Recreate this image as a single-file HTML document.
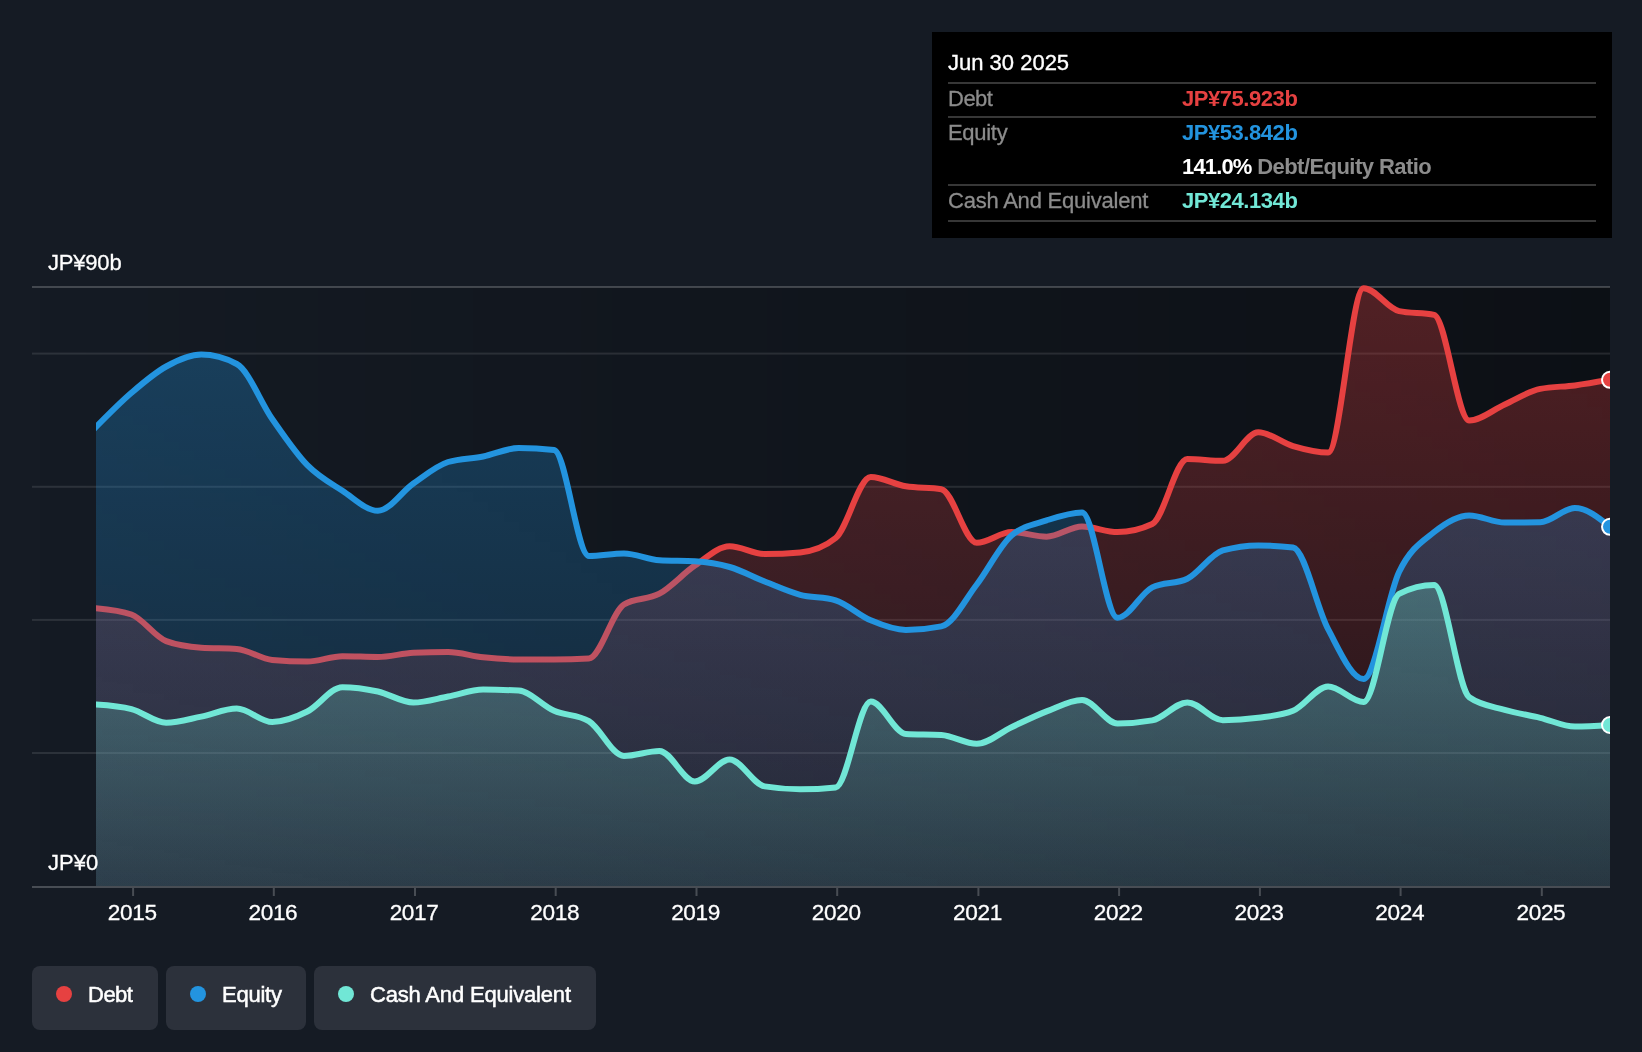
<!DOCTYPE html>
<html lang="en">
<head>
<meta charset="utf-8">
<title>Debt to Equity History</title>
<style>
html,body{margin:0;padding:0;background:#151b24;}
body{width:1642px;height:1052px;position:relative;overflow:hidden;font-family:"Liberation Sans",sans-serif;color:#fff;}
#wrap{position:absolute;left:0;top:0;width:1642px;height:1052px;will-change:transform;}
#chart{position:absolute;left:0;top:0;display:block;}
#chart{font-family:"Liberation Sans",sans-serif;font-size:22px;}
#chart text{fill:#fff;stroke:#fff;stroke-width:0.3px;}
#tip{position:absolute;left:932px;top:32px;width:680px;height:206px;background:#000;font-size:22px;}
#tip .ln{position:absolute;left:16px;width:648px;height:2px;background:#373737;}
#tip .t{position:absolute;white-space:nowrap;line-height:26px;height:26px;}
#tip .lab{left:16px;color:#8c8c8c;-webkit-text-stroke:0.3px #8c8c8c;}
#tip .val{left:250px;font-weight:bold;letter-spacing:-0.45px;}
#tip .title{left:16px;color:#fff;-webkit-text-stroke:0.35px #fff;}
.grey{color:#8c8c8c;}
#legend{position:absolute;left:32px;top:966px;height:64px;display:flex;gap:8px;}
#legend .b{height:64px;box-sizing:border-box;padding:0 24px;background:#2c313b;border-radius:8px;display:flex;align-items:flex-start;font-size:22px;white-space:nowrap;}
#legend .dot{width:16px;height:16px;border-radius:50%;margin:20px 16px 0 0;flex:none;}
#legend .tx{-webkit-text-stroke:0.5px #fff;display:block;line-height:26px;margin-top:16px;}
</style>
</head>
<body>
<div id="wrap">
<svg id="chart" width="1642" height="1052" viewBox="0 0 1642 1052">
<defs>
<linearGradient id="gbg" x1="0" y1="0" x2="1" y2="0"><stop offset="0" stop-color="#000" stop-opacity="0"/><stop offset="1" stop-color="#000" stop-opacity="0.4"/></linearGradient>
<linearGradient id="gdebt" x1="0" y1="0" x2="0" y2="1"><stop offset="0" stop-color="#e64141" stop-opacity="0.315"/><stop offset="1" stop-color="#e64141" stop-opacity="0.085"/></linearGradient>
<linearGradient id="gequity" x1="0" y1="0" x2="0" y2="1"><stop offset="0" stop-color="#2394df" stop-opacity="0.3"/><stop offset="1" stop-color="#2394df" stop-opacity="0.12"/></linearGradient>
<linearGradient id="gcash" x1="0" y1="0" x2="0" y2="1"><stop offset="0" stop-color="#71e7d6" stop-opacity="0.3"/><stop offset="1" stop-color="#71e7d6" stop-opacity="0.1"/></linearGradient>
<clipPath id="clip"><rect x="96" y="270" width="1514" height="616"/></clipPath>
</defs>
<rect x="32" y="287" width="1578" height="599" fill="url(#gbg)"/>
<g fill="#fff">
<rect x="32" y="286" width="1578" height="2" fill-opacity="0.2"/>
<rect x="32" y="352.6" width="1578" height="2" fill-opacity="0.1"/>
<rect x="32" y="485.8" width="1578" height="2" fill-opacity="0.1"/>
<rect x="32" y="618.9" width="1578" height="2" fill-opacity="0.1"/>
<rect x="32" y="752" width="1578" height="2" fill-opacity="0.1"/>
<rect x="32" y="886" width="1578" height="2" fill-opacity="0.22"/>
<rect x="132.1" y="888" width="2" height="8" fill="#fff" fill-opacity="0.22"/><rect x="272.8" y="888" width="2" height="8" fill="#fff" fill-opacity="0.22"/><rect x="414.0" y="888" width="2" height="8" fill="#fff" fill-opacity="0.22"/><rect x="554.7" y="888" width="2" height="8" fill="#fff" fill-opacity="0.22"/><rect x="695.5" y="888" width="2" height="8" fill="#fff" fill-opacity="0.22"/><rect x="836.2" y="888" width="2" height="8" fill="#fff" fill-opacity="0.22"/><rect x="977.4" y="888" width="2" height="8" fill="#fff" fill-opacity="0.22"/><rect x="1118.1" y="888" width="2" height="8" fill="#fff" fill-opacity="0.22"/><rect x="1258.9" y="888" width="2" height="8" fill="#fff" fill-opacity="0.22"/><rect x="1399.6" y="888" width="2" height="8" fill="#fff" fill-opacity="0.22"/><rect x="1540.8" y="888" width="2" height="8" fill="#fff" fill-opacity="0.22"/>
</g>
<g clip-path="url(#clip)" fill="none" stroke-width="6" stroke-linejoin="round" stroke-linecap="square">
<path d="M96.00,608.20C107.83,609.25,119.65,610.30,131.48,614.50C143.05,618.61,154.62,636.75,166.19,641.10C177.88,645.50,189.58,646.91,201.28,647.70C213.10,648.50,224.93,648.10,236.76,648.90C248.58,649.70,260.41,658.75,272.23,659.90C283.93,661.03,295.63,661.60,307.33,661.60C319.03,661.60,330.72,656.20,342.42,656.20C354.25,656.20,366.07,657.00,377.90,657.00C389.72,657.00,401.55,653.35,413.38,652.80C424.95,652.27,436.52,652.00,448.08,652.00C459.78,652.00,471.48,656.07,483.18,657.30C495.00,658.55,506.83,659.40,518.66,659.40C530.48,659.40,542.31,659.40,554.13,659.40C565.70,659.40,577.27,659.10,588.84,658.50C600.54,657.89,612.24,611.62,623.93,604.50C635.76,597.30,647.59,600.18,659.41,593.70C671.24,587.22,683.06,573.57,694.89,565.60C706.46,557.80,718.03,546.20,729.60,546.20C741.29,546.20,752.99,554.00,764.69,554.00C776.52,554.00,788.34,553.47,800.17,552.40C811.99,551.33,823.82,547.60,835.65,538.00C847.34,528.50,859.04,477.00,870.74,477.00C882.44,477.00,894.13,484.39,905.83,486.30C917.66,488.23,929.48,487.27,941.31,489.20C953.14,491.13,964.96,542.80,976.79,542.80C988.36,542.80,999.93,532.10,1011.50,532.10C1023.19,532.10,1034.89,536.70,1046.59,536.70C1058.41,536.70,1070.24,526.50,1082.07,526.50C1093.89,526.50,1105.72,532.10,1117.55,532.10C1129.11,532.10,1140.68,529.40,1152.25,524.00C1163.95,518.54,1175.65,459.00,1187.34,459.00C1199.17,459.00,1211.00,460.80,1222.82,460.80C1234.65,460.80,1246.48,432.30,1258.30,432.30C1269.87,432.30,1281.44,442.72,1293.01,446.10C1304.71,449.52,1316.40,452.60,1328.10,452.60C1339.93,452.60,1351.75,288.20,1363.58,288.20C1375.41,288.20,1387.23,308.54,1399.06,311.10C1410.76,313.63,1422.45,312.37,1434.15,314.90C1445.85,317.43,1457.55,420.60,1469.24,420.60C1481.07,420.60,1492.90,409.68,1504.72,404.40C1516.55,399.12,1528.37,391.29,1540.20,388.90C1551.77,386.57,1563.34,386.90,1574.91,385.40C1586.60,383.88,1598.30,381.84,1610.00,379.80L1610.00,886L96.00,886Z" fill="url(#gdebt)"/>
<path d="M96.00,608.20C107.83,609.25,119.65,610.30,131.48,614.50C143.05,618.61,154.62,636.75,166.19,641.10C177.88,645.50,189.58,646.91,201.28,647.70C213.10,648.50,224.93,648.10,236.76,648.90C248.58,649.70,260.41,658.75,272.23,659.90C283.93,661.03,295.63,661.60,307.33,661.60C319.03,661.60,330.72,656.20,342.42,656.20C354.25,656.20,366.07,657.00,377.90,657.00C389.72,657.00,401.55,653.35,413.38,652.80C424.95,652.27,436.52,652.00,448.08,652.00C459.78,652.00,471.48,656.07,483.18,657.30C495.00,658.55,506.83,659.40,518.66,659.40C530.48,659.40,542.31,659.40,554.13,659.40C565.70,659.40,577.27,659.10,588.84,658.50C600.54,657.89,612.24,611.62,623.93,604.50C635.76,597.30,647.59,600.18,659.41,593.70C671.24,587.22,683.06,573.57,694.89,565.60C706.46,557.80,718.03,546.20,729.60,546.20C741.29,546.20,752.99,554.00,764.69,554.00C776.52,554.00,788.34,553.47,800.17,552.40C811.99,551.33,823.82,547.60,835.65,538.00C847.34,528.50,859.04,477.00,870.74,477.00C882.44,477.00,894.13,484.39,905.83,486.30C917.66,488.23,929.48,487.27,941.31,489.20C953.14,491.13,964.96,542.80,976.79,542.80C988.36,542.80,999.93,532.10,1011.50,532.10C1023.19,532.10,1034.89,536.70,1046.59,536.70C1058.41,536.70,1070.24,526.50,1082.07,526.50C1093.89,526.50,1105.72,532.10,1117.55,532.10C1129.11,532.10,1140.68,529.40,1152.25,524.00C1163.95,518.54,1175.65,459.00,1187.34,459.00C1199.17,459.00,1211.00,460.80,1222.82,460.80C1234.65,460.80,1246.48,432.30,1258.30,432.30C1269.87,432.30,1281.44,442.72,1293.01,446.10C1304.71,449.52,1316.40,452.60,1328.10,452.60C1339.93,452.60,1351.75,288.20,1363.58,288.20C1375.41,288.20,1387.23,308.54,1399.06,311.10C1410.76,313.63,1422.45,312.37,1434.15,314.90C1445.85,317.43,1457.55,420.60,1469.24,420.60C1481.07,420.60,1492.90,409.68,1504.72,404.40C1516.55,399.12,1528.37,391.29,1540.20,388.90C1551.77,386.57,1563.34,386.90,1574.91,385.40C1586.60,383.88,1598.30,381.84,1610.00,379.80" stroke="#e64141"/>
<path d="M96.00,427.00C107.83,414.98,119.65,402.97,131.48,392.80C143.05,382.85,154.62,372.86,166.19,366.50C177.88,360.07,189.58,354.60,201.28,354.60C213.10,354.60,224.93,357.73,236.76,364.00C248.58,370.27,260.41,402.06,272.23,419.00C283.93,435.76,295.63,453.23,307.33,465.20C319.03,477.17,330.72,483.23,342.42,490.80C354.25,498.45,366.07,510.80,377.90,510.80C389.72,510.80,401.55,491.70,413.38,483.50C424.95,475.48,436.52,465.63,448.08,462.00C459.78,458.33,471.48,458.82,483.18,456.50C495.00,454.16,506.83,448.00,518.66,448.00C530.48,448.00,542.31,448.67,554.13,450.00C565.70,451.30,577.27,555.90,588.84,555.90C600.54,555.90,612.24,553.50,623.93,553.50C635.76,553.50,647.59,559.63,659.41,560.30C671.24,560.97,683.06,560.63,694.89,561.30C706.46,561.95,718.03,563.67,729.60,567.00C741.29,570.37,752.99,576.89,764.69,581.50C776.52,586.16,788.34,591.67,800.17,594.80C811.99,597.93,823.82,596.63,835.65,600.30C847.34,603.93,859.04,615.35,870.74,620.30C882.44,625.25,894.13,630.00,905.83,630.00C917.66,630.00,929.48,628.80,941.31,626.40C953.14,624.00,964.96,599.85,976.79,584.50C988.36,569.49,999.93,545.46,1011.50,535.50C1023.19,525.43,1034.89,524.24,1046.59,520.40C1058.41,516.52,1070.24,512.40,1082.07,512.40C1093.89,512.40,1105.72,617.80,1117.55,617.80C1129.11,617.80,1140.68,593.07,1152.25,587.40C1163.95,581.67,1175.65,584.53,1187.34,578.80C1199.17,573.00,1211.00,553.73,1222.82,550.40C1234.65,547.07,1246.48,545.40,1258.30,545.40C1269.87,545.40,1281.44,546.10,1293.01,547.50C1304.71,548.92,1316.40,607.33,1328.10,629.20C1339.93,651.31,1351.75,679.10,1363.58,679.10C1375.41,679.10,1387.23,596.53,1399.06,572.00C1410.76,547.74,1422.45,541.43,1434.15,532.00C1445.85,522.57,1457.55,515.40,1469.24,515.40C1481.07,515.40,1492.90,522.60,1504.72,522.60C1516.55,522.60,1528.37,522.50,1540.20,522.30C1551.77,522.10,1563.34,508.00,1574.91,508.00C1586.60,508.00,1598.30,517.40,1610.00,526.80L1610.00,886L96.00,886Z" fill="url(#gequity)"/>
<path d="M96.00,427.00C107.83,414.98,119.65,402.97,131.48,392.80C143.05,382.85,154.62,372.86,166.19,366.50C177.88,360.07,189.58,354.60,201.28,354.60C213.10,354.60,224.93,357.73,236.76,364.00C248.58,370.27,260.41,402.06,272.23,419.00C283.93,435.76,295.63,453.23,307.33,465.20C319.03,477.17,330.72,483.23,342.42,490.80C354.25,498.45,366.07,510.80,377.90,510.80C389.72,510.80,401.55,491.70,413.38,483.50C424.95,475.48,436.52,465.63,448.08,462.00C459.78,458.33,471.48,458.82,483.18,456.50C495.00,454.16,506.83,448.00,518.66,448.00C530.48,448.00,542.31,448.67,554.13,450.00C565.70,451.30,577.27,555.90,588.84,555.90C600.54,555.90,612.24,553.50,623.93,553.50C635.76,553.50,647.59,559.63,659.41,560.30C671.24,560.97,683.06,560.63,694.89,561.30C706.46,561.95,718.03,563.67,729.60,567.00C741.29,570.37,752.99,576.89,764.69,581.50C776.52,586.16,788.34,591.67,800.17,594.80C811.99,597.93,823.82,596.63,835.65,600.30C847.34,603.93,859.04,615.35,870.74,620.30C882.44,625.25,894.13,630.00,905.83,630.00C917.66,630.00,929.48,628.80,941.31,626.40C953.14,624.00,964.96,599.85,976.79,584.50C988.36,569.49,999.93,545.46,1011.50,535.50C1023.19,525.43,1034.89,524.24,1046.59,520.40C1058.41,516.52,1070.24,512.40,1082.07,512.40C1093.89,512.40,1105.72,617.80,1117.55,617.80C1129.11,617.80,1140.68,593.07,1152.25,587.40C1163.95,581.67,1175.65,584.53,1187.34,578.80C1199.17,573.00,1211.00,553.73,1222.82,550.40C1234.65,547.07,1246.48,545.40,1258.30,545.40C1269.87,545.40,1281.44,546.10,1293.01,547.50C1304.71,548.92,1316.40,607.33,1328.10,629.20C1339.93,651.31,1351.75,679.10,1363.58,679.10C1375.41,679.10,1387.23,596.53,1399.06,572.00C1410.76,547.74,1422.45,541.43,1434.15,532.00C1445.85,522.57,1457.55,515.40,1469.24,515.40C1481.07,515.40,1492.90,522.60,1504.72,522.60C1516.55,522.60,1528.37,522.50,1540.20,522.30C1551.77,522.10,1563.34,508.00,1574.91,508.00C1586.60,508.00,1598.30,517.40,1610.00,526.80" stroke="#2394df"/>
<path d="M96.00,704.50C107.83,705.27,119.65,706.03,131.48,709.10C143.05,712.10,154.62,722.70,166.19,722.70C177.88,722.70,189.58,718.93,201.28,716.60C213.10,714.24,224.93,708.60,236.76,708.60C248.58,708.60,260.41,722.00,272.23,722.00C283.93,722.00,295.63,717.30,307.33,711.50C319.03,705.70,330.72,687.20,342.42,687.20C354.25,687.20,366.07,688.95,377.90,691.50C389.72,694.05,401.55,702.50,413.38,702.50C424.95,702.50,436.52,698.64,448.08,696.50C459.78,694.34,471.48,689.60,483.18,689.60C495.00,689.60,506.83,689.93,518.66,690.60C530.48,691.27,542.31,705.70,554.13,710.80C565.70,715.79,577.27,714.23,588.84,721.10C600.54,728.04,612.24,755.90,623.93,755.90C635.76,755.90,647.59,751.00,659.41,751.00C671.24,751.00,683.06,781.50,694.89,781.50C706.46,781.50,718.03,759.60,729.60,759.60C741.29,759.60,752.99,784.49,764.69,786.40C776.52,788.33,788.34,789.30,800.17,789.30C811.99,789.30,823.82,788.67,835.65,787.40C847.34,786.15,859.04,701.60,870.74,701.60C882.44,701.60,894.13,733.34,905.83,734.00C917.66,734.67,929.48,734.33,941.31,735.00C953.14,735.67,964.96,743.80,976.79,743.80C988.36,743.80,999.93,732.57,1011.50,727.20C1023.19,721.77,1034.89,715.93,1046.59,711.40C1058.41,706.82,1070.24,699.90,1082.07,699.90C1093.89,699.90,1105.72,723.50,1117.55,723.50C1129.11,723.50,1140.68,722.47,1152.25,720.40C1163.95,718.31,1175.65,702.40,1187.34,702.40C1199.17,702.40,1211.00,720.20,1222.82,720.20C1234.65,720.20,1246.48,719.40,1258.30,717.80C1269.87,716.23,1281.44,715.47,1293.01,710.80C1304.71,706.08,1316.40,686.40,1328.10,686.40C1339.93,686.40,1351.75,702.00,1363.58,702.00C1375.41,702.00,1387.23,599.83,1399.06,593.90C1410.76,588.03,1422.45,585.10,1434.15,585.10C1445.85,585.10,1457.55,688.99,1469.24,697.30C1481.07,705.70,1492.90,706.48,1504.72,709.90C1516.55,713.32,1528.37,714.98,1540.20,717.80C1551.77,720.56,1563.34,726.60,1574.91,726.60C1586.60,726.60,1598.30,725.80,1610.00,725.00L1610.00,886L96.00,886Z" fill="url(#gcash)"/>
<path d="M96.00,704.50C107.83,705.27,119.65,706.03,131.48,709.10C143.05,712.10,154.62,722.70,166.19,722.70C177.88,722.70,189.58,718.93,201.28,716.60C213.10,714.24,224.93,708.60,236.76,708.60C248.58,708.60,260.41,722.00,272.23,722.00C283.93,722.00,295.63,717.30,307.33,711.50C319.03,705.70,330.72,687.20,342.42,687.20C354.25,687.20,366.07,688.95,377.90,691.50C389.72,694.05,401.55,702.50,413.38,702.50C424.95,702.50,436.52,698.64,448.08,696.50C459.78,694.34,471.48,689.60,483.18,689.60C495.00,689.60,506.83,689.93,518.66,690.60C530.48,691.27,542.31,705.70,554.13,710.80C565.70,715.79,577.27,714.23,588.84,721.10C600.54,728.04,612.24,755.90,623.93,755.90C635.76,755.90,647.59,751.00,659.41,751.00C671.24,751.00,683.06,781.50,694.89,781.50C706.46,781.50,718.03,759.60,729.60,759.60C741.29,759.60,752.99,784.49,764.69,786.40C776.52,788.33,788.34,789.30,800.17,789.30C811.99,789.30,823.82,788.67,835.65,787.40C847.34,786.15,859.04,701.60,870.74,701.60C882.44,701.60,894.13,733.34,905.83,734.00C917.66,734.67,929.48,734.33,941.31,735.00C953.14,735.67,964.96,743.80,976.79,743.80C988.36,743.80,999.93,732.57,1011.50,727.20C1023.19,721.77,1034.89,715.93,1046.59,711.40C1058.41,706.82,1070.24,699.90,1082.07,699.90C1093.89,699.90,1105.72,723.50,1117.55,723.50C1129.11,723.50,1140.68,722.47,1152.25,720.40C1163.95,718.31,1175.65,702.40,1187.34,702.40C1199.17,702.40,1211.00,720.20,1222.82,720.20C1234.65,720.20,1246.48,719.40,1258.30,717.80C1269.87,716.23,1281.44,715.47,1293.01,710.80C1304.71,706.08,1316.40,686.40,1328.10,686.40C1339.93,686.40,1351.75,702.00,1363.58,702.00C1375.41,702.00,1387.23,599.83,1399.06,593.90C1410.76,588.03,1422.45,585.10,1434.15,585.10C1445.85,585.10,1457.55,688.99,1469.24,697.30C1481.07,705.70,1492.90,706.48,1504.72,709.90C1516.55,713.32,1528.37,714.98,1540.20,717.80C1551.77,720.56,1563.34,726.60,1574.91,726.60C1586.60,726.60,1598.30,725.80,1610.00,725.00" stroke="#71e7d6"/>
<g stroke="#fff" stroke-width="2">
<circle cx="1610" cy="379.8" r="8" fill="#e64141"/>
<circle cx="1610" cy="526.8" r="8" fill="#2394df"/>
<circle cx="1610" cy="725.0" r="8" fill="#71e7d6"/>
</g>
</g>

<text id="ymax" x="48" y="270" letter-spacing="-0.2">JP¥90b</text>
<text id="ymin" x="48" y="870">JP¥0</text>
<g id="xl" letter-spacing="-0.35" style="font-size:22.6px"><text x="132.2" y="920" text-anchor="middle">2015</text><text x="272.9" y="920" text-anchor="middle">2016</text><text x="414.1" y="920" text-anchor="middle">2017</text><text x="554.8" y="920" text-anchor="middle">2018</text><text x="695.6" y="920" text-anchor="middle">2019</text><text x="836.3" y="920" text-anchor="middle">2020</text><text x="977.5" y="920" text-anchor="middle">2021</text><text x="1118.2" y="920" text-anchor="middle">2022</text><text x="1259.0" y="920" text-anchor="middle">2023</text><text x="1399.7" y="920" text-anchor="middle">2024</text><text x="1540.9" y="920" text-anchor="middle">2025</text></g>
</svg>

<div id="tip">
<div class="t title" id="t_title" style="top:18px">Jun 30 2025</div>
<div class="ln" style="top:50px"></div>
<div class="t lab" id="t_debt" style="top:54px;letter-spacing:-0.5px">Debt</div>
<div class="t val" id="v_debt" style="top:54px;color:#e64141">JP¥75.923b</div>
<div class="ln" style="top:84px"></div>
<div class="t lab" id="t_equity" style="top:88px;letter-spacing:-0.3px">Equity</div>
<div class="t val" id="v_equity" style="top:88px;color:#2394df">JP¥53.842b</div>
<div class="t val" id="v_ratio" style="top:122px;color:#fff"><span id="v_pct" style="letter-spacing:-0.85px">141.0%</span> <span class="grey" id="v_rl" style="letter-spacing:-0.55px">Debt/Equity Ratio</span></div>
<div class="ln" style="top:152px"></div>
<div class="t lab" id="t_cash" style="top:156px;letter-spacing:-0.22px">Cash And Equivalent</div>
<div class="t val" id="v_cash" style="top:156px;color:#71e7d6">JP¥24.134b</div>
<div class="ln" style="top:188px"></div>
</div>

<div id="legend">
<div class="b" style="width:126px"><span class="dot" style="background:#e64141"></span><span class="tx" id="l_debt" style="letter-spacing:-0.5px">Debt</span></div>
<div class="b" style="width:140px"><span class="dot" style="background:#2394df"></span><span class="tx" id="l_equity" style="letter-spacing:-0.25px">Equity</span></div>
<div class="b" style="width:282px"><span class="dot" style="background:#71e7d6"></span><span class="tx" id="l_cash" style="letter-spacing:-0.18px">Cash And Equivalent</span></div>
</div>
</div>
</body>
</html>
